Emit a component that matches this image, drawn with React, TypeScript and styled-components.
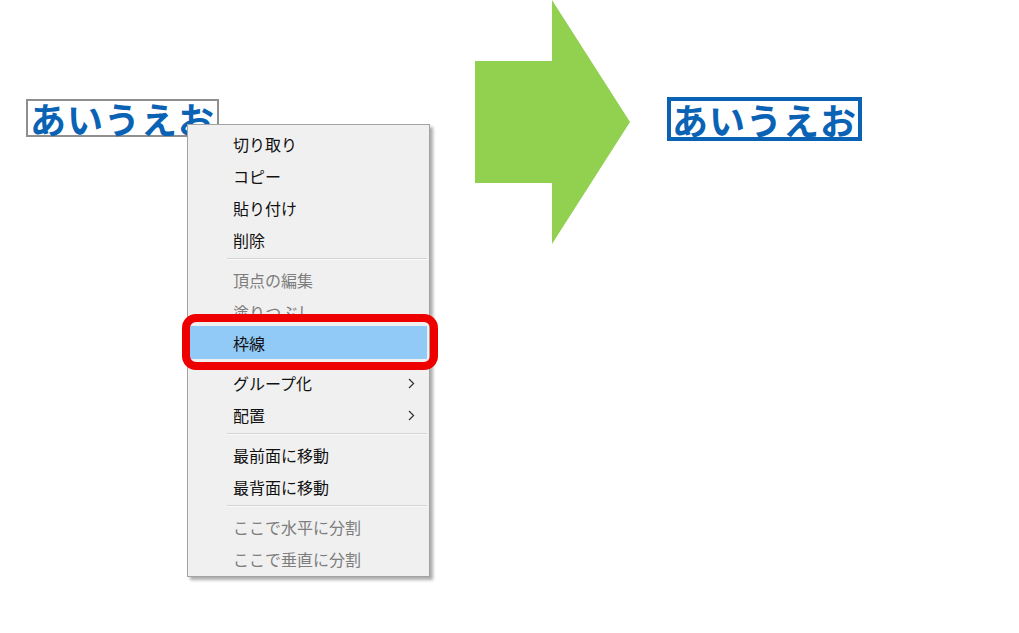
import React from "react";
import styled, { createGlobalStyle, css } from "styled-components";

const GlobalStyle = createGlobalStyle`
  html, body {
    margin: 0;
    padding: 0;
    background: #ffffff;
  }
  body {
    font-family: "Noto Sans CJK JP", "Noto Sans", sans-serif;
  }
`;

const Scene = styled.div`
  position: relative;
  width: 1019px;
  height: 633px;
  background: #ffffff;
  display: flex;
  align-items: flex-start;
  overflow: hidden;
`;

const Before = styled.div`
  position: relative;
  padding: 99px 0 0 26px;
`;

const TextShape = styled.div<{ $selected?: boolean }>`
  box-sizing: border-box;
  display: flex;
  align-items: center;
  justify-content: center;
  font-family: "Noto Sans CJK JP", sans-serif;
  font-weight: 700;
  font-size: 36px;
  line-height: 1;
  color: #0a62b4;
  white-space: nowrap;
  letter-spacing: 1px;
  background: #ffffff;
  ${({ $selected }) =>
    $selected
      ? css`
          width: 193px;
          height: 38px;
          border: 2px solid #8f8f8f;
        `
      : css`
          width: 195px;
          height: 44px;
          border: 4px solid #0a62b4;
        `}
`;

const ArrowWrap = styled.div`
  margin-left: 256px;
  width: 155px;
  height: 244px;
  display: flex;
`;

const After = styled.div`
  margin: 97px 0 0 37px;
`;

const Menu = styled.div`
  position: absolute;
  left: 187px;
  top: 124px;
  z-index: 2;
  box-sizing: border-box;
  width: 243px;
  height: 453px;
  padding: 3px 0 0;
  background: #f0f0f0;
  border: 1px solid #a3a3a3;
  box-shadow: 3px 3px 3px rgba(0, 0, 0, 0.32);
  display: flex;
  flex-direction: column;
  font-family: "Noto Sans CJK JP", sans-serif;
  font-size: 16px;
`;

const Item = styled.div<{ $disabled?: boolean; $active?: boolean }>`
  position: relative;
  height: 32px;
  flex: none;
  display: flex;
  align-items: center;
  padding: 0 14px 0 45px;
  color: ${({ $disabled }) => ($disabled ? "#7d7d7d" : "#111111")};
  ${({ $active }) =>
    $active &&
    css`
      height: 33px;
      margin: -2px 2px 8px 2px;
      padding-left: 43px;
      background: #91c9f7;
      &::after {
        content: "";
        position: absolute;
        left: -8px;
        right: -11px;
        top: -12px;
        bottom: -11px;
        border: 8px solid #ee0000;
        border-radius: 14px;
      }
    `}
`;

const Label = styled.span`
  flex: 1;
  line-height: 1;
  white-space: nowrap;
`;

const Separator = styled.div`
  flex: none;
  height: 1px;
  margin: 2px 2px 4px 39px;
  background: #d4d4d4;
  border-bottom: 1px solid #fafafa;
`;

const Chevron = () => (
  <svg width="7" height="11" viewBox="0 0 7 11" aria-hidden="true">
    <polyline
      points="1,1 5.6,5.5 1,10"
      fill="none"
      stroke="#333333"
      strokeWidth="1.2"
    />
  </svg>
);

const BlockArrow = () => (
  <svg width="155" height="244" viewBox="0 0 155 244">
    <polygon
      points="0,61 77,61 77,0 155,122 77,244 77,183 0,183"
      fill="#92d050"
    />
  </svg>
);

type Entry =
  | { kind: "item"; label: string; disabled?: boolean; active?: boolean; sub?: boolean }
  | { kind: "sep" };

const entries: Entry[] = [
  { kind: "item", label: "切り取り" },
  { kind: "item", label: "コピー" },
  { kind: "item", label: "貼り付け" },
  { kind: "item", label: "削除" },
  { kind: "sep" },
  { kind: "item", label: "頂点の編集", disabled: true },
  { kind: "item", label: "塗りつぶし", disabled: true },
  { kind: "item", label: "枠線", active: true },
  { kind: "item", label: "グループ化", sub: true },
  { kind: "item", label: "配置", sub: true },
  { kind: "sep" },
  { kind: "item", label: "最前面に移動" },
  { kind: "item", label: "最背面に移動" },
  { kind: "sep" },
  { kind: "item", label: "ここで水平に分割", disabled: true },
  { kind: "item", label: "ここで垂直に分割", disabled: true },
];

export default function App() {
  return (
    <>
      <GlobalStyle />
      <Scene>
        <Before>
          <TextShape $selected>あいうえお</TextShape>
          <Menu>
            {entries.map((e, i) =>
              e.kind === "sep" ? (
                <Separator key={i} />
              ) : (
                <Item key={i} $disabled={e.disabled} $active={e.active}>
                  <Label>{e.label}</Label>
                  {e.sub && <Chevron />}
                </Item>
              )
            )}
          </Menu>
        </Before>
        <ArrowWrap>
          <BlockArrow />
        </ArrowWrap>
        <After>
          <TextShape>あいうえお</TextShape>
        </After>
      </Scene>
    </>
  );
}
